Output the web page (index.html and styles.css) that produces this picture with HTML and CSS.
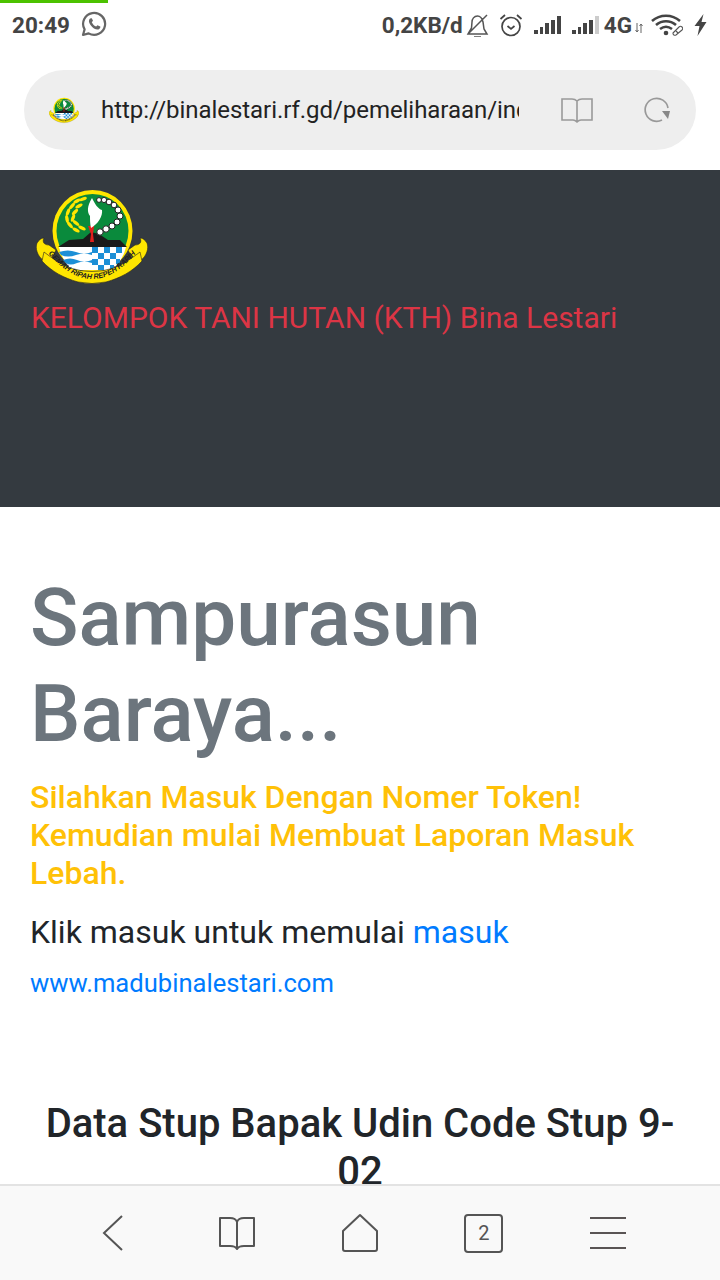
FILE: index.html
```html
<!DOCTYPE html>
<html lang="en">
<head>
  <meta charset="UTF-8" />
  <title>Bina Lestari</title>
  <meta name="viewport" content="width=device-width, initial-scale=1" />
  <link rel="stylesheet" href="styles.css">
</head>
<body>

<svg class="defs" width="0" height="0">
  <defs>
    <path id="ribbon-arc" d="M11 64 Q56 118 101 64" />
    <g id="crest">
      <!-- side curls -->
      <path d="M8 73 C1 68 -1 60 1 55 C3 52 5 50 8 50 C6 54 8 57 13 57 L20 62 L14 74 Z" fill="#ffe600" stroke="#222" stroke-width=".6" />
      <path d="M104 73 C111 68 113 60 111 55 C109 52 107 50 104 50 C106 54 104 57 99 57 L92 62 L98 74 Z" fill="#ffe600" stroke="#222" stroke-width=".6" />
      <ellipse cx="56.5" cy="43" rx="40" ry="41" fill="#ffe600" />
      <ellipse cx="56.5" cy="43" rx="36" ry="37" fill="#0a8a3c" />
      <!-- water and checks -->
      <path d="M23 59 H56 V82 H36 Q26 72 23 59 Z" fill="#fff" />
      <path d="M23 64 Q32 61 40 64 T56 64 V67 Q48 64 40 67 T25 67 Z M27 72 Q34 69 41 72 T56 72 V75 Q48 72 41 75 T30 75 Z" fill="#1c8fd6" />
      <path d="M56 59 H90 Q87 72 76 82 H56 Z" fill="#fff" />
      <path d="M56 59h6v6h-6z M68 59h6v6h-6z M80 59h6v6h-6z M62 65h6v6h-6z M74 65h6v6h-6z M56 71h6v6h-6z M68 71h6v6h-6z M80 71h4v5h-4z M62 77h6v5h-6z M74 77h4v4h-4z" fill="#1c8fd6" />
      <!-- mountain -->
      <path d="M22 59 L33 52 L47 51 L55 44 L63 46 L72 52 L84 52 L91 59 Z" fill="#1a1a1a" />
      <!-- flame -->
      <path d="M52 38 L58 38 L57 46 L58 54 L54 54 L55 46 Z" fill="#e0201c" />
      <path d="M56 10 C51 18 51 24 54 28 C54 32 54 36 55 40 C62 36 67 28 66 22 C62 21 59 16 56 10 Z" fill="#fff" />
      <!-- smoke -->
      <g class="crest-smoke">
        <circle cx="63" cy="12" r="2.4" /><circle cx="68" cy="12" r="2.6" /><circle cx="73" cy="14" r="2.8" />
        <circle cx="78" cy="17" r="2.8" /><circle cx="82" cy="22" r="3" /><circle cx="84" cy="28" r="3" />
        <circle cx="81" cy="34" r="3" /><circle cx="76" cy="38" r="3" /><circle cx="70" cy="41" r="3.2" /><circle cx="64" cy="44" r="3.2" />
      </g>
      <!-- rice -->
      <g class="crest-rice">
        <ellipse cx="47" cy="11" rx="4" ry="1.7" transform="rotate(-20 47 11)" />
        <ellipse cx="41" cy="13" rx="4" ry="1.7" transform="rotate(-30 41 13)" />
        <ellipse cx="43" cy="18" rx="4" ry="1.7" transform="rotate(-30 43 18)" />
        <ellipse cx="36" cy="18" rx="4" ry="1.7" transform="rotate(-50 36 18)" />
        <ellipse cx="39" cy="24" rx="4" ry="1.7" transform="rotate(-45 39 24)" />
        <ellipse cx="32" cy="24" rx="4" ry="1.7" transform="rotate(-70 32 24)" />
        <ellipse cx="37" cy="30" rx="4" ry="1.7" transform="rotate(-70 37 30)" />
        <ellipse cx="31" cy="31" rx="4" ry="1.7" transform="rotate(80 31 31)" />
        <ellipse cx="40" cy="35" rx="4" ry="1.7" transform="rotate(40 40 35)" />
        <ellipse cx="34" cy="37" rx="4" ry="1.7" transform="rotate(50 34 37)" />
        <ellipse cx="46" cy="40" rx="4" ry="1.7" transform="rotate(25 46 40)" />
        <ellipse cx="40" cy="42" rx="4" ry="1.7" transform="rotate(30 40 42)" />
      </g>
      <!-- ribbon -->
      <path d="M8 64 C16 70 24 76 34 80 Q56 87 78 80 C88 76 96 70 104 64 L106 73 C96 84 84 90 70 94 Q56 97 42 94 C28 90 16 84 6 73 Z" fill="#ffe600" stroke="#222" stroke-width=".6" />
      <text class="crest-motto"><textPath href="#ribbon-arc" startOffset="50%" text-anchor="middle">GEMAH RIPAH REPEH RAPIH</textPath></text>
    </g>
  </defs>
</svg>

<div class="status-bar">
  <div class="load-line"></div>
  <div class="status-left">
    <span class="status-text">20:49</span>
    <svg class="ic-whatsapp" viewBox="0 0 26 26"><path d="M2 24 L3.6 18.4 A11 11 0 1 1 7.6 22.4 Z" fill="none" stroke="#666" stroke-width="2.2" stroke-linejoin="round" /><path d="M9 7.5 C7.5 9 7.5 11 9.5 14 C12 17.5 15 19 17.5 18.5 C19 18 19.6 16.5 19.3 15.6 L16.4 14.2 L15.2 15.6 C13.5 15 11.5 13 10.8 11.2 L12 9.8 L10.8 7.2 Z" fill="#666" /></svg>
  </div>
  <div class="status-right">
    <span class="status-text">0,2KB/d</span>
    <svg class="ic-bell" viewBox="0 0 24 24"><path d="M2 21 H21 L18 16 L17 9 C16 5 14 3 11.5 3 C8 3 6 6 6 9 L5.5 15 Z M8 24 H15 M3 20 L21 2" fill="none" stroke="#555" stroke-width="1.5" /></svg>
    <svg class="ic-alarm" viewBox="0 0 24 24"><circle cx="12" cy="13.5" r="9" fill="none" stroke="#444" stroke-width="1.7" /><path d="M8.5 13 L12 16 L15.5 13 M1.5 6 L6 2 M22.5 6 L18 2" fill="none" stroke="#444" stroke-width="1.7" /></svg>
    <div class="signal"><i class="b1"></i><i class="b2"></i><i class="b3"></i><i class="b4"></i><i class="b5"></i></div>
    <div class="signal sim2"><i class="b1"></i><i class="b2"></i><i class="b3"></i><i class="b4"></i><i class="b5"></i></div>
    <span class="status-text net">4G</span>
    <svg class="ic-updown" viewBox="0 0 8 10"><path d="M2 0 V9 M6 1 V10 M0.5 7 L2 9 L3.5 7 M4.5 3 L6 1 L7.5 3" fill="none" stroke="#666" stroke-width="1" /></svg>
    <svg class="ic-wifi" viewBox="0 0 32 22"><path d="M1 7 C9 0 21 0 29 7 M5 11 C11 6 19 6 25 11 M9 15 C13 12 17 12 21 15" fill="none" stroke="#444" stroke-width="2.6" /><circle cx="15" cy="19" r="2.3" fill="#444" /><path d="M22 19 L28 13 A2 2 0 0 1 31 16 L25 21 A2 2 0 0 1 22 19 Z M25 17 L27 19" fill="#fff" stroke="#555" stroke-width="1.1" /></svg>
    <svg class="ic-bolt" viewBox="0 0 14 22"><path d="M10 0 L1 12 H6 L4 22 L13 8 H8 Z" fill="#444" /></svg>
  </div>
</div>

<div class="url-wrap">
  <div class="url-bar">
    <svg class="favicon" viewBox="0 0 112 96"><use href="#crest" /></svg>
    <div class="url-text">http://binalestari.rf.gd/pemeliharaan/index.php</div>
    <svg class="ic-reader" viewBox="0 0 32 26"><path d="M1 2 H11 C13 2 15 3 16 4 C17 3 19 2 21 2 H31 V23 H20 C18 23 17 24 16 25 C15 24 14 23 12 23 H1 Z M16 4 V25" fill="none" stroke="#999" stroke-width="1.6" /></svg>
    <svg class="ic-reload" viewBox="0 0 28 28"><path d="M25 12 A11.5 11.5 0 1 0 19 24" fill="none" stroke="#999" stroke-width="1.7" /><path d="M27 15 L19 15 L25 23 Z" fill="#888" /></svg>
  </div>
</div>

<div class="page">
  <header class="site-head">
    <svg class="logo" viewBox="0 0 112 96"><use href="#crest" /></svg>
    <div class="site-name">KELOMPOK TANI HUTAN (KTH) Bina Lestari</div>
  </header>

  <main class="intro">
    <h1>Sampurasun Baraya...</h1>
    <h5>Silahkan Masuk Dengan Nomer Token! Kemudian mulai Membuat Laporan Masuk Lebah.</h5>
    <p class="lead">Klik masuk untuk memulai <a href="#">masuk</a></p>
    <p class="site-link"><a href="#">www.madubinalestari.com</a></p>
    <h3>Data Stup Bapak Udin Code Stup 9-02</h3>
  </main>
</div>

<nav class="bottom-nav">
  <svg class="ic-back" viewBox="0 0 24 38"><path d="M21 2 L3 19 L21 36" fill="none" stroke="#555" stroke-width="2" /></svg>
  <svg class="ic-book" viewBox="0 0 38 36"><path d="M2 3 H12 C15 3 18 4 19 7 C20 4 23 3 26 3 H36 V31 H26 C23 31 20 32 19 34 C18 32 15 31 12 31 H2 Z M19 7 V34" fill="none" stroke="#555" stroke-width="2" stroke-linejoin="round" /></svg>
  <svg class="ic-home" viewBox="0 0 38 40"><path d="M19 2 L36 18 V36 Q36 38 34 38 H4 Q2 38 2 36 V18 Z" fill="none" stroke="#555" stroke-width="2" stroke-linejoin="round" /></svg>
  <div class="tab-count">2</div>
  <div class="ic-menu"><i></i><i></i><i></i></div>
</nav>

</body>
</html>
```

FILE: styles.css
```css
* { box-sizing: border-box; }
html, body { margin: 0; padding: 0; }
body { width: 720px; height: 1280px; overflow: hidden; display: flex; flex-direction: column; background: #fff; font-family: Roboto, sans-serif; color: #212529; }
.defs { display: block; }
a { color: #007bff; text-decoration: none; }

/* status bar */
.status-bar { position: relative; flex: none; height: 50px; display: flex; justify-content: space-between; align-items: center; padding: 0 12px; }
.load-line { position: absolute; left: 0; top: 0; width: 108px; height: 3px; background: #4cc200; }
.status-left, .status-right { display: flex; align-items: center; }
.status-text { font-size: 22.5px; font-weight: 700; color: #444; }
.ic-whatsapp { width: 26px; height: 26px; margin-left: 11px; margin-top: -2px; }
.ic-bell { width: 24px; height: 24px; margin-left: 3px; }
.ic-alarm { width: 24px; height: 24px; margin-left: 9px; }
.signal { display: flex; align-items: flex-end; gap: 2px; height: 18px; margin-left: 11px; }
.signal i { display: block; width: 3.8px; background: #444; }
.signal .b1 { height: 4px; }
.signal .b2 { height: 7px; }
.signal .b3 { height: 11px; }
.signal .b4 { height: 14px; }
.signal .b5 { height: 18px; }
.sim2 .b5 { background: #ccc; }
.net { margin-left: 5px; }
.ic-updown { width: 8px; height: 10px; margin: 6px 0 0 3px; }
.ic-wifi { width: 32px; height: 22px; margin-left: 8px; }
.ic-bolt { width: 15px; height: 22px; margin-left: 10px; }

/* url bar */
.url-wrap { flex: none; padding: 20px 24px; }
.url-bar { height: 80px; border-radius: 40px; background: #eee; display: flex; align-items: center; padding-left: 25px; }
.favicon { flex: none; width: 30px; height: 32px; }
.url-text { width: 418px; margin-left: 22px; font-size: 24px; letter-spacing: -0.05px; color: #222; white-space: nowrap; overflow: hidden; }
.ic-reader { flex: none; width: 32px; height: 26px; margin-left: 42px; }
.ic-reload { flex: none; width: 28px; height: 28px; margin-left: 50px; }

/* page content */
.page { flex: 1; min-height: 0; overflow: hidden; }
.site-head { height: 337px; background: #343a40; padding: 18px 31px 0; }
.logo { display: block; width: 112px; height: 96px; margin-left: 5px; }
.site-name { margin-top: 14px; font-size: 30px; line-height: 40px; color: #dc3545; }
.intro { padding: 63px 30px 0; }
.intro h1 { margin: 0; font-size: 80px; line-height: 96px; font-weight: 500; color: #6c757d; }
.intro h5 { margin: 16px 0 0; font-size: 32px; line-height: 38px; font-weight: 500; color: #ffc107; }
.lead { margin: 16px 0 0; font-size: 32px; line-height: 48px; }
.site-link { margin: 8px 0 0; font-size: 25.6px; line-height: 38px; }
.intro h3 { margin: 98px 0 0; font-size: 40px; line-height: 48px; font-weight: 500; text-align: center; }

/* browser toolbar */
.bottom-nav { flex: none; height: 96px; background: #f9f9f9; border-top: 2px solid #e3e3e3; display: grid; grid-template-columns: repeat(5, 123.7px); justify-items: center; align-items: center; padding-left: 51px; }
.ic-back { width: 24px; height: 38px; }
.ic-book { width: 38px; height: 36px; }
.ic-home { width: 38px; height: 40px; }
.tab-count { width: 39px; height: 39px; border: 2px solid #555; border-radius: 4px; font-size: 20px; color: #555; display: flex; align-items: center; justify-content: center; }
.ic-menu { width: 36px; height: 32px; display: flex; flex-direction: column; justify-content: space-between; }
.ic-menu i { display: block; height: 2px; background: #5a5555; }

/* crest */
.crest-motto { font-family: "Liberation Sans", sans-serif; font-size: 7.4px; font-style: italic; font-weight: 700; fill: #222; }
.crest-smoke circle { fill: #fff; stroke: #222; stroke-width: 1; }
.crest-rice ellipse { fill: #ffe600; }
```
